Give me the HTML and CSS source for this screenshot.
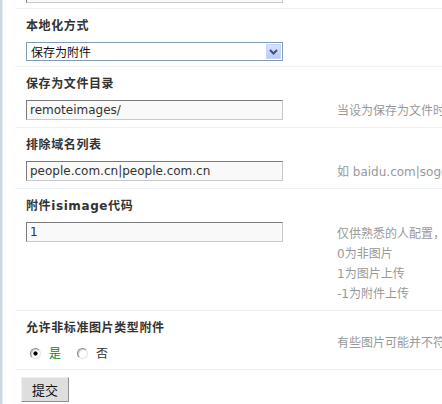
FILE: index.html
```html
<!DOCTYPE html>
<html lang="zh-CN">
<head>
<meta charset="utf-8">
<title>本地化设置</title>
<link rel="stylesheet" href="styles.css">
</head>
<body>
<div class="page">
  <div class="panel">
    <div class="row row-first">
      <div class="value"><div class="field"><input class="text" type="text" value=""></div></div>
    </div>

    <div class="row">
      <div class="title">本地化方式</div>
      <div class="value value-sel">
        <div class="field">
          <div class="select"><span class="sel-text">保存为附件</span><span class="arrow"><svg width="9" height="6" viewBox="0 0 9 6"><path d="M1 1 L4.5 4.5 L8 1" fill="none" stroke="#3f5280" stroke-width="2"/></svg></span></div>
        </div>
        <div class="tips"></div>
      </div>
    </div>

    <div class="row">
      <div class="title">保存为文件目录</div>
      <div class="value">
        <div class="field"><input class="text" type="text" value="remoteimages/"></div>
        <div class="tips">当设为保存为文件时</div>
      </div>
    </div>

    <div class="row">
      <div class="title">排除域名列表</div>
      <div class="value">
        <div class="field"><input class="text" type="text" value="people.com.cn|people.com.cn"></div>
        <div class="tips">如 baidu.com|sogou.com</div>
      </div>
    </div>

    <div class="row">
      <div class="title">附件isimage代码</div>
      <div class="value">
        <div class="field"><input class="text" type="text" value="1"></div>
        <div class="tips tips-multi">
          <div>仅供熟悉的人配置，</div>
          <div>0为非图片</div>
          <div>1为图片上传</div>
          <div>-1为附件上传</div>
        </div>
      </div>
    </div>

    <div class="row">
      <div class="title">允许非标准图片类型附件</div>
      <div class="value value-radio">
        <div class="field">
          <ul class="radios">
            <li class="on"><input type="radio" name="allow" checked><span>是</span></li>
            <li><input type="radio" name="allow"><span>否</span></li>
          </ul>
        </div>
        <div class="tips">有些图片可能并不符合标准</div>
      </div>
    </div>

    <div class="actions"><button class="btn" type="button">提交</button></div>
  </div>
</div>
</body>
</html>
```

FILE: styles.css
```css
html, body {
  margin: 0;
  padding: 0;
  background: #fff;
}
body {
  font-family: "DejaVu Sans", "Noto Sans CJK SC", sans-serif;
  font-size: 12px;
  color: #333;
  overflow: hidden;
}
.page {
  height: 404px;
  border-left: 2px solid #c9d8e1;
  box-shadow: inset 1px 0 0 #e8eff3;
  overflow: hidden;
}
.panel {
  margin-left: 13px;
}
.row {
  border-bottom: 1px solid #eef1f3;
  padding-left: 11px;
}
.title {
  padding-top: 10px;
  line-height: 14px;
  font-weight: bold;
  font-size: 12px;
  letter-spacing: 0.6px;
  color: #333;
  white-space: nowrap;
}
.value {
  display: flex;
  margin-top: 9px;
  padding-bottom: 6px;
}
.value-sel {
  padding-bottom: 5px;
}
.row-first .value {
  margin-top: -17px;
  padding-bottom: 5px;
}
.field {
  width: 311px;
  flex: none;
}
.text {
  display: block;
  box-sizing: border-box;
  width: 257px;
  height: 20px;
  margin: 0;
  padding: 0 3px;
  border: 1px solid;
  border-color: #7b7b7b #c9c9c9 #c9c9c9 #7b7b7b;
  background: #f9f9f9;
  font-family: "DejaVu Sans", sans-serif;
  font-size: 12px;
  color: #333;
  outline: none;
}
.select {
  box-sizing: border-box;
  width: 257px;
  height: 19px;
  border: 1px solid #7f9db9;
  background: #fff;
  display: flex;
  align-items: center;
  justify-content: space-between;
  padding: 0 1px 0 4px;
}
.sel-text {
  font-family: "Noto Sans CJK SC", sans-serif;
  font-size: 12px;
  color: #111;
  line-height: 17px;
}
.arrow {
  width: 15px;
  height: 15px;
  display: flex;
  align-items: center;
  justify-content: center;
  background: linear-gradient(#dbe4fb, #b8c8f3);
  border-radius: 1px;
  box-shadow: inset 0 0 0 1px #c7d4f7;
}
.tips {
  padding-top: 1px;
  line-height: 20px;
  color: #999;
  white-space: nowrap;
  font-size: 12px;
}
.tips-multi {
  padding-top: 2px;
  padding-bottom: 0;
}
.value-radio {
  margin-top: -2px;
}
.value-radio .tips {
  padding-top: 0;
}
.radios {
  list-style: none;
  margin: 0;
  padding: 10px 0 0 4px;
  display: flex;
  line-height: 20px;
}
.radios li {
  display: flex;
  align-items: center;
  margin-right: 16px;
  font-family: "Noto Sans CJK SC", sans-serif;
  color: #333;
}
.radios li.on span {
  color: #0a8a0a;
}
.radios input {
  -webkit-appearance: none;
  appearance: none;
  box-sizing: border-box;
  width: 11px;
  height: 11px;
  margin: 0 8px 0 0;
  border-radius: 50%;
  border: 1px solid;
  border-color: #8a8a8a #e6e6e6 #e6e6e6 #8a8a8a;
  background: #fff;
  box-shadow: inset 1px 1px 0 #cfcfcf;
}
.radios input:checked {
  background: radial-gradient(circle, #000 0 1.8px, #fff 2.4px);
}
.actions {
  padding: 7px 0 0 6px;
}
.btn {
  box-sizing: border-box;
  width: 48px;
  height: 25px;
  margin: 0;
  padding: 0;
  border: 1px solid;
  border-color: #eeeeee #8f8f8f #8f8f8f #eeeeee;
  background: #dedede;
  font-family: "Noto Sans CJK SC", sans-serif;
  font-size: 13px;
  color: #111;
}
```
